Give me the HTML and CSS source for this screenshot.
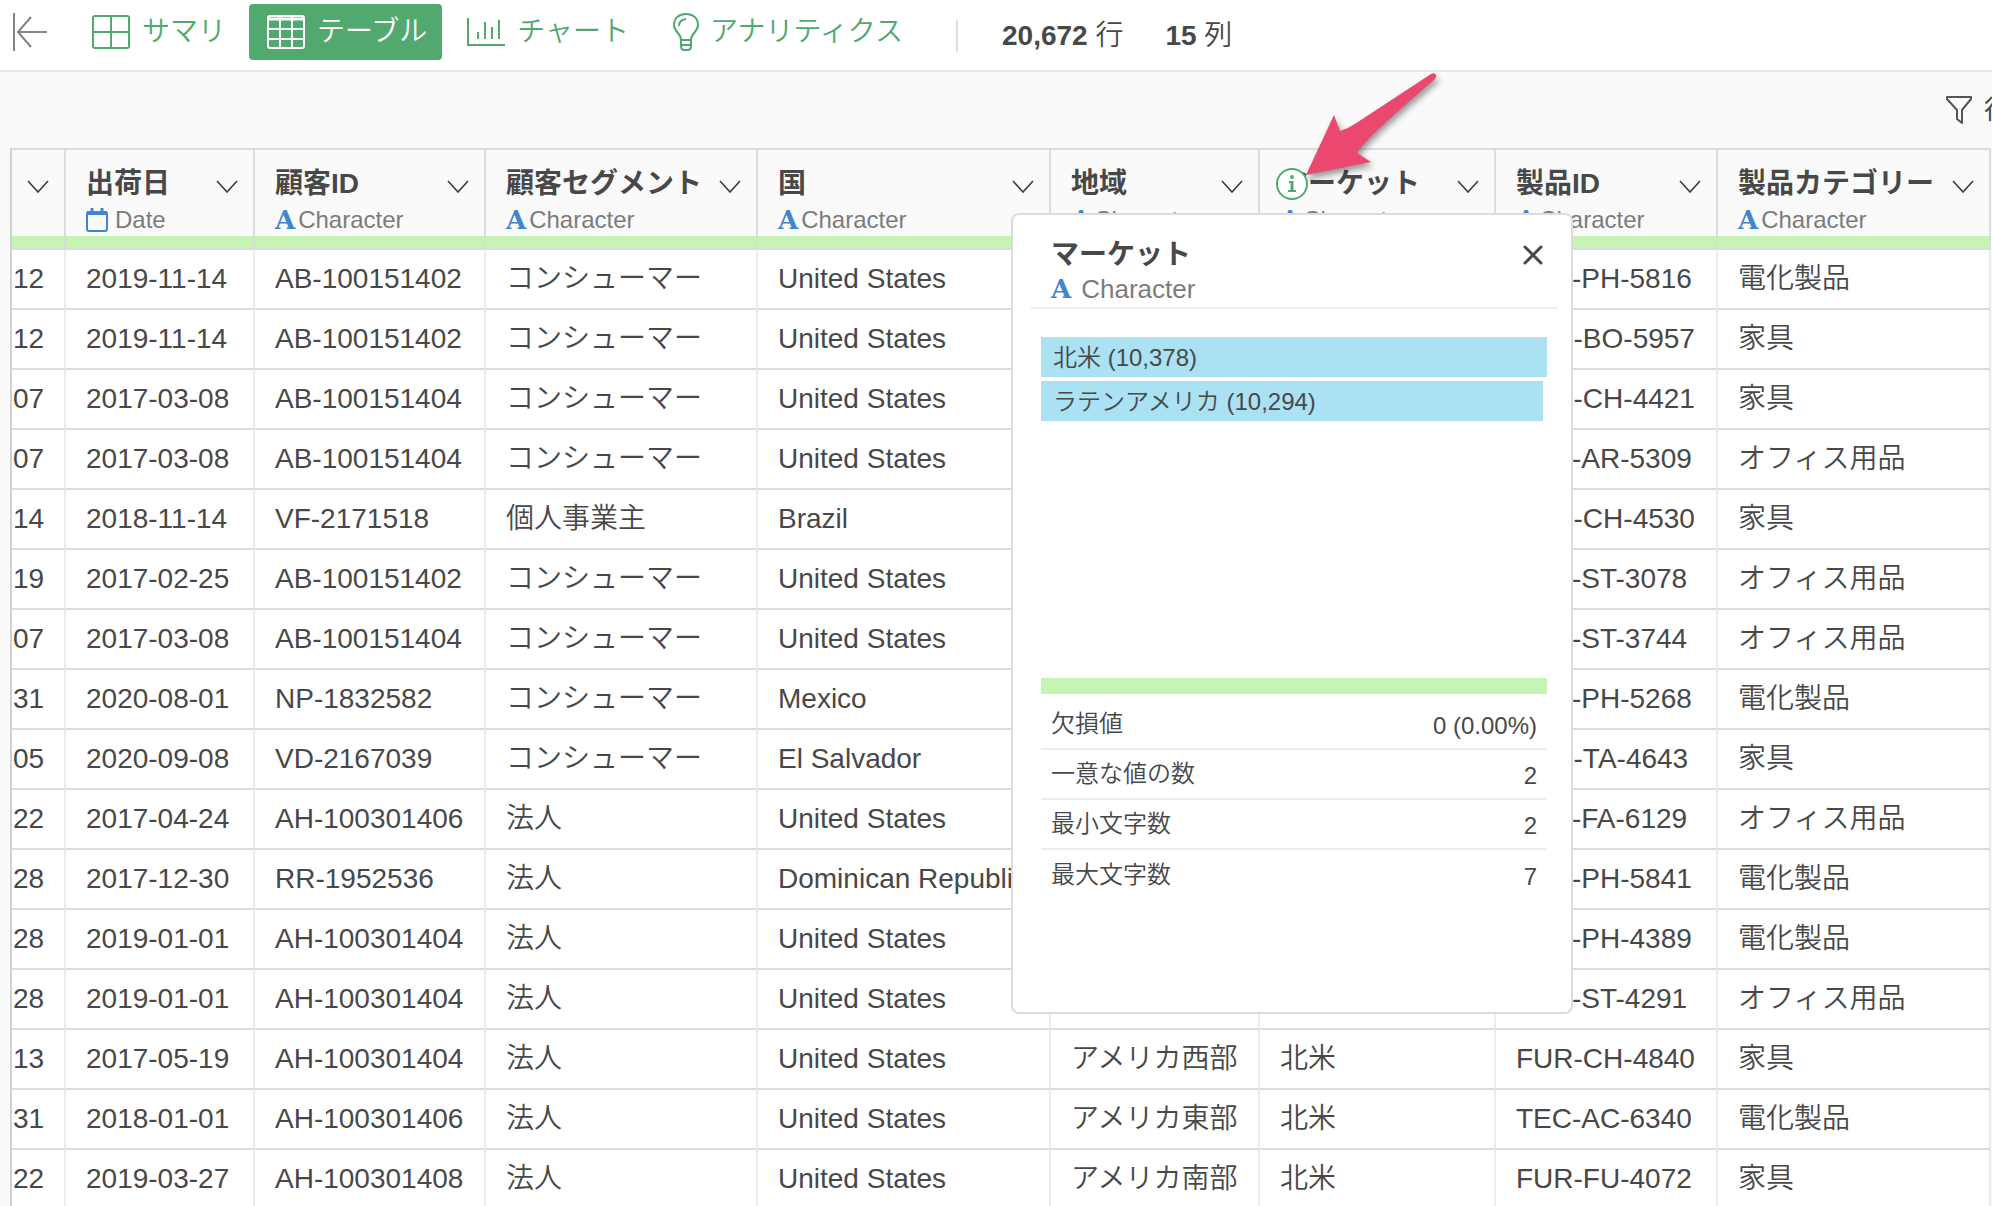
FILE: index.html
```html
<!DOCTYPE html>
<html lang="ja">
<head>
    <meta charset="UTF-8">
    <meta name="viewport" content="width=device-width, initial-scale=1.0">
    <title>テーブル</title>
    <link rel="stylesheet" href="styles.css">
</head>
<body>
    <!-- 共通アイコン -->
    <svg class="sprite" aria-hidden="true">
        <symbol id="chevron" viewBox="0 0 22 13">
            <path d="M1 1 L11 12 L21 1" fill="none" stroke="#3c3c3c" stroke-width="1.6"/>
        </symbol>
    </svg>

    <nav class="topbar">
        <button class="back" aria-label="戻る">
            <svg width="36" height="40" viewBox="0 0 36 40" fill="none" stroke="#858585" stroke-width="2">
                <path d="M2 1 V39"/>
                <path d="M35 20 H6 M19 5 L6 20 L19 35"/>
            </svg>
        </button>
        <a href="#" class="tab">
            <svg width="38" height="34" viewBox="0 0 38 34" fill="none" stroke="#51a970" stroke-width="2">
                <rect x="1" y="1" width="36" height="32" rx="2"/>
                <path d="M19 1 V33 M1 17 H37"/>
            </svg>
            <span>サマリ</span>
        </a>
        <a href="#" class="tab active">
            <svg width="38" height="34" viewBox="0 0 38 34" fill="none" stroke="#fff" stroke-width="3">
                <rect x="1" y="1" width="36" height="32" rx="2" stroke-width="2"/>
                <path d="M2 4 H36" stroke-width="3"/>
                <path d="M13 2 V33 M25 2 V33 M1 14 H37 M1 24 H37" stroke-width="2"/>
            </svg>
            <span>テーブル</span>
        </a>
        <a href="#" class="tab">
            <svg width="38" height="34" viewBox="0 0 38 34" fill="none" stroke="#51a970" stroke-width="2">
                <path d="M1 3 V30 H38"/>
                <path d="M11 17 V24 M18 7 V24 M25 12 V24 M32 5 V24"/>
            </svg>
            <span>チャート</span>
        </a>
        <a href="#" class="tab tab-bulb">
            <svg width="28" height="38" viewBox="0 0 28 38" fill="none" stroke="#51a970" stroke-width="2">
                <path d="M9 27 C9 20 2 19 2 12 C2 5 7 1 14 1 C21 1 26 5 26 12 C26 19 19 20 19 27 Z"/>
                <path d="M9 27 V32 Q9 37 12 37 H16 Q19 37 19 32 V27 M9 32 H19"/>
                <path d="M7 13 Q7 7 14 6"/>
            </svg>
            <span>アナリティクス</span>
        </a>
        <div class="counts">
            <span><b>20,672</b> 行</span>
            <span><b>15</b> 列</span>
        </div>
    </nav>

    <div class="toolbar">
        <button class="filter">
            <svg width="26" height="28" viewBox="0 0 26 28" fill="none" stroke="#555" stroke-width="2" stroke-linejoin="round">
                <path d="M1 1 H25 V3 L16 14 V27 L11 23 V14 L1 3 Z"/>
            </svg>
            <span>行</span>
        </button>
    </div>

    <main class="grid">
        <table>
            <colgroup>
                <col class="w-cut"><col class="w-date"><col class="w-customer"><col class="w-segment"><col class="w-country">
                <col class="w-region"><col class="w-market"><col class="w-product"><col class="w-category">
            </colgroup>
            <thead>
                <tr>
                    <th>
                        <div class="head head-cut"><button class="menu" aria-label="列メニュー"><svg width="22" height="13"><use href="#chevron"/></svg></button></div>
                        <div class="quality"></div>
                    </th>
                    <th>
                        <div class="head">
                            <div class="title"><span>出荷日</span><button class="menu" aria-label="列メニュー"><svg width="22" height="13"><use href="#chevron"/></svg></button></div>
                            <div class="type">
                                <svg class="cal" width="22" height="24" viewBox="0 0 22 24" fill="none" stroke="#3f86cf" stroke-width="2">
                                    <rect x="1" y="4" width="20" height="19" rx="2"/>
                                    <path d="M1 5 H21" stroke-width="4"/>
                                    <path d="M6 0 V5 M16 0 V5" stroke-width="3"/>
                                </svg>
                                Date
                            </div>
                        </div>
                        <div class="quality"></div>
                    </th>
                    <th>
                        <div class="head">
                            <div class="title"><span>顧客ID</span><button class="menu" aria-label="列メニュー"><svg width="22" height="13"><use href="#chevron"/></svg></button></div>
                            <div class="type"><i>A</i>Character</div>
                        </div>
                        <div class="quality"></div>
                    </th>
                    <th>
                        <div class="head">
                            <div class="title"><span>顧客セグメント</span><button class="menu" aria-label="列メニュー"><svg width="22" height="13"><use href="#chevron"/></svg></button></div>
                            <div class="type"><i>A</i>Character</div>
                        </div>
                        <div class="quality"></div>
                    </th>
                    <th>
                        <div class="head">
                            <div class="title"><span>国</span><button class="menu" aria-label="列メニュー"><svg width="22" height="13"><use href="#chevron"/></svg></button></div>
                            <div class="type"><i>A</i>Character</div>
                        </div>
                        <div class="quality"></div>
                    </th>
                    <th>
                        <div class="head">
                            <div class="title"><span>地域</span><button class="menu" aria-label="列メニュー"><svg width="22" height="13"><use href="#chevron"/></svg></button></div>
                            <div class="type"><i>A</i>Character</div>
                        </div>
                        <div class="quality"></div>
                    </th>
                    <th class="current">
                        <div class="head">
                            <div class="title"><span>マーケット</span><button class="menu" aria-label="列メニュー"><svg width="22" height="13"><use href="#chevron"/></svg></button></div>
                            <div class="type"><i>A</i>Character</div>
                        </div>
                        <div class="quality"></div>

                        <svg class="arrow" width="140" height="120" viewBox="0 0 140 120">
                            <path d="M6 105 L34 45 L40 61 Q48 59 64 48 L131 4 Q135 2 136 5 Q137 7 134 10 L104 36 Q65 70 57 83 L71 92 Z" fill="#ea486e"/>
                        </svg>
                        <button class="info" aria-label="列の情報">
                            <svg width="32" height="32" viewBox="0 0 32 32">
                                <circle cx="16" cy="16" r="15" fill="#fff" stroke="#51a970" stroke-width="2"/>
                                <circle cx="16" cy="9" r="2" fill="#51a970"/>
                                <path d="M13 14 H16 V23 M12 23 H20" fill="none" stroke="#51a970" stroke-width="2"/>
                                <path d="M16 13 V23" stroke="#51a970" stroke-width="3"/>
                            </svg>
                        </button>

                        <!-- 列のサマリ -->
                        <section class="popup">
                            <header>
                                <div>
                                    <h2>マーケット</h2>
                                    <p class="type"><i>A</i>Character</p>
                                </div>
                                <button class="close" aria-label="閉じる">
                                    <svg width="20" height="20" viewBox="0 0 20 20" stroke="#484848" stroke-width="3" stroke-linecap="round">
                                        <path d="M2 2 L18 18 M18 2 L2 18"/>
                                    </svg>
                                </button>
                            </header>
                            <div class="bars">
                                <div class="bar" style="width: 100%">北米 (10,378)</div>
                                <div class="bar" style="width: 99.2%">ラテンアメリカ (10,294)</div>
                            </div>
                            <div class="ok-bar"></div>
                            <dl>
                                <div><dt>欠損値</dt><dd>0 (0.00%)</dd></div>
                                <div><dt>一意な値の数</dt><dd>2</dd></div>
                                <div><dt>最小文字数</dt><dd>2</dd></div>
                                <div><dt>最大文字数</dt><dd>7</dd></div>
                            </dl>
                        </section>
                    </th>
                    <th>
                        <div class="head">
                            <div class="title"><span>製品ID</span><button class="menu" aria-label="列メニュー"><svg width="22" height="13"><use href="#chevron"/></svg></button></div>
                            <div class="type"><i>A</i>Character</div>
                        </div>
                        <div class="quality"></div>
                    </th>
                    <th>
                        <div class="head">
                            <div class="title"><span>製品カテゴリー</span><button class="menu" aria-label="列メニュー"><svg width="22" height="13"><use href="#chevron"/></svg></button></div>
                            <div class="type"><i>A</i>Character</div>
                        </div>
                        <div class="quality"></div>
                    </th>
                </tr>
            </thead>
            <tbody>
                <tr><td>12</td><td>2019-11-14</td><td>AB-100151402</td><td>コンシューマー</td><td>United States</td><td></td><td></td><td>TEC-PH-5816</td><td>電化製品</td></tr>
                <tr><td>12</td><td>2019-11-14</td><td>AB-100151402</td><td>コンシューマー</td><td>United States</td><td></td><td></td><td>FUR-BO-5957</td><td>家具</td></tr>
                <tr><td>07</td><td>2017-03-08</td><td>AB-100151404</td><td>コンシューマー</td><td>United States</td><td></td><td></td><td>FUR-CH-4421</td><td>家具</td></tr>
                <tr><td>07</td><td>2017-03-08</td><td>AB-100151404</td><td>コンシューマー</td><td>United States</td><td></td><td></td><td>OFF-AR-5309</td><td>オフィス用品</td></tr>
                <tr><td>14</td><td>2018-11-14</td><td>VF-2171518</td><td>個人事業主</td><td>Brazil</td><td></td><td></td><td>FUR-CH-4530</td><td>家具</td></tr>
                <tr><td>19</td><td>2017-02-25</td><td>AB-100151402</td><td>コンシューマー</td><td>United States</td><td></td><td></td><td>OFF-ST-3078</td><td>オフィス用品</td></tr>
                <tr><td>07</td><td>2017-03-08</td><td>AB-100151404</td><td>コンシューマー</td><td>United States</td><td></td><td></td><td>OFF-ST-3744</td><td>オフィス用品</td></tr>
                <tr><td>31</td><td>2020-08-01</td><td>NP-1832582</td><td>コンシューマー</td><td>Mexico</td><td></td><td></td><td>TEC-PH-5268</td><td>電化製品</td></tr>
                <tr><td>05</td><td>2020-09-08</td><td>VD-2167039</td><td>コンシューマー</td><td>El Salvador</td><td></td><td></td><td>FUR-TA-4643</td><td>家具</td></tr>
                <tr><td>22</td><td>2017-04-24</td><td>AH-100301406</td><td>法人</td><td>United States</td><td></td><td></td><td>OFF-FA-6129</td><td>オフィス用品</td></tr>
                <tr><td>28</td><td>2017-12-30</td><td>RR-1952536</td><td>法人</td><td>Dominican Republic</td><td></td><td></td><td>TEC-PH-5841</td><td>電化製品</td></tr>
                <tr><td>28</td><td>2019-01-01</td><td>AH-100301404</td><td>法人</td><td>United States</td><td></td><td></td><td>TEC-PH-4389</td><td>電化製品</td></tr>
                <tr><td>28</td><td>2019-01-01</td><td>AH-100301404</td><td>法人</td><td>United States</td><td></td><td></td><td>OFF-ST-4291</td><td>オフィス用品</td></tr>
                <tr><td>13</td><td>2017-05-19</td><td>AH-100301404</td><td>法人</td><td>United States</td><td>アメリカ西部</td><td>北米</td><td>FUR-CH-4840</td><td>家具</td></tr>
                <tr><td>31</td><td>2018-01-01</td><td>AH-100301406</td><td>法人</td><td>United States</td><td>アメリカ東部</td><td>北米</td><td>TEC-AC-6340</td><td>電化製品</td></tr>
                <tr><td>22</td><td>2019-03-27</td><td>AH-100301408</td><td>法人</td><td>United States</td><td>アメリカ南部</td><td>北米</td><td>FUR-FU-4072</td><td>家具</td></tr>
            </tbody>
        </table>
    </main>
</body>
</html>
```
FILE: styles.css
```css
* {
    box-sizing: border-box;
}

html {
    overflow: hidden;
}

body {
    margin: 0;
    height: 100vh;
    overflow: hidden;
    background: #fafafa;
    color: #484848;
    font-family: "Liberation Sans", "Noto Sans CJK JP", sans-serif;
    font-size: 28px;
    line-height: 32px;
}

button {
    padding: 0;
    border: 0;
    background: none;
    color: inherit;
    font: inherit;
    cursor: pointer;
}

svg {
    display: block;
    flex: none;
}

.sprite {
    position: absolute;
    width: 0;
    height: 0;
}

/* 上部ナビ */
.topbar {
    display: flex;
    align-items: flex-start;
    height: 72px;
    padding: 4px 12px;
    background: #fff;
    border-bottom: 2px solid #e6e6e6;
    font-weight: 350;
    white-space: nowrap;
}

.back {
    display: flex;
    align-items: center;
    height: 56px;
    margin-right: 26px;
}

.tab {
    display: flex;
    align-items: center;
    gap: 12px;
    height: 56px;
    padding: 0 15px 0 18px;
    color: #51a970;
    text-decoration: none;
    border-radius: 4px;
}

.tab + .tab {
    margin-left: 8px;
}

.tab.active {
    background: #51a970;
    color: #fff;
}

.tab.active + .tab {
    margin-left: 7px;
}

.tab-bulb {
    gap: 10px;
    padding-left: 20px;
}

.counts {
    display: flex;
    gap: 42px;
    height: 32px;
    margin: 16px 0 0 38px;
    padding-left: 44px;
    border-left: 2px solid #dcdcdc;
}

/* ツールバー */
.toolbar {
    display: flex;
    justify-content: flex-end;
    align-items: center;
    height: 76px;
}

.filter {
    display: flex;
    align-items: center;
    gap: 12px;
    margin-right: -18px;
    font-size: 26px;
}

/* データテーブル */
.grid {
    padding: 0 1px 0 10px;
}

table {
    width: 100%;
    table-layout: fixed;
    border-collapse: separate;
    border-spacing: 0;
    border-top: 2px solid #dcdcdc;
    border-left: 2px solid #d0d0d0;
}

.w-cut { width: 54px; }
.w-date { width: 189px; }
.w-customer { width: 231px; }
.w-segment { width: 272px; }
.w-country { width: 293px; }
.w-region { width: 209px; }
.w-market { width: 236px; }
.w-product { width: 222px; }
.w-category { width: 273px; }

th {
    padding: 0;
    vertical-align: top;
    text-align: left;
    border-right: 2px solid #dcdcdc;
    border-bottom: 2px solid #dcdcdc;
}

.head {
    height: 86px;
    padding: 16px 15px 0 20px;
}

.title {
    display: flex;
    align-items: center;
    justify-content: space-between;
    height: 36px;
    margin-bottom: 2px;
    white-space: nowrap;
}

.head-cut {
    display: flex;
    justify-content: flex-end;
    padding: 16px 15px 0 0;
}

.menu {
    height: 36px;
    padding-top: 4px;
}

.type {
    display: flex;
    align-items: center;
    gap: 3px;
    margin: 0;
    color: #7c7c7c;
    font-size: 24px;
    font-weight: normal;
}

.type i {
    color: #3f86cf;
    font-family: "DejaVu Serif", serif;
    font-size: 26px;
    font-style: normal;
    font-weight: bold;
}

.cal {
    margin-right: 4px;
}

.quality {
    height: 12px;
    background: #c5f4b4;
}

td {
    height: 60px;
    padding: 0 0 0 20px;
    background: #fff;
    border-right: 2px solid #ececec;
    border-bottom: 2px solid #dcdcdc;
    white-space: nowrap;
}

td:first-child {
    padding-left: 1px;
}

tbody {
    font-weight: 350;
}

/* 列情報 */
.current {
    position: relative;
}

.info {
    position: absolute;
    top: 18px;
    left: 16px;
    z-index: 3;
}

.arrow {
    position: absolute;
    top: -80px;
    left: 40px;
    z-index: 2;
    filter: drop-shadow(2px 4px 3px rgba(0, 0, 0, 0.4));
}

.popup {
    position: absolute;
    top: 63px;
    left: -249px;
    z-index: 1;
    width: 562px;
    height: 801px;
    padding: 22px 24px 20px 26px;
    background: #fff;
    border: 2px solid #dcdcdc;
    border-radius: 8px;
    font-size: 24px;
    font-weight: 350;
}

.popup header {
    display: flex;
    justify-content: space-between;
    align-items: flex-start;
    height: 72px;
    margin: 0 -10px 0 -8px;
    padding: 0 14px 0 20px;
    border-bottom: 2px solid #ececec;
}

.popup h2 {
    margin: 0;
    font-size: 28px;
    line-height: 36px;
}

.popup .type {
    gap: 10px;
    font-size: 26px;
}

.close {
    padding-top: 8px;
}

.bars {
    display: flex;
    flex-direction: column;
    gap: 4px;
    height: 369px;
    padding-top: 28px;
    margin: 0 0 0 2px;
}

.bar {
    height: 40px;
    padding-left: 12px;
    background: #aae1f3;
    line-height: 42px;
    white-space: nowrap;
}

.ok-bar {
    height: 16px;
    margin-left: 2px;
    background: #c5f4b4;
}

dl {
    margin: 6px 0 0 2px;
}

dl div {
    display: flex;
    justify-content: space-between;
    align-items: center;
    height: 50px;
    padding: 0 10px;
    border-bottom: 2px solid #ececec;
}

dl div:last-child {
    border-bottom: 0;
}

dd {
    margin: 0;
    padding-top: 4px;
}
```
